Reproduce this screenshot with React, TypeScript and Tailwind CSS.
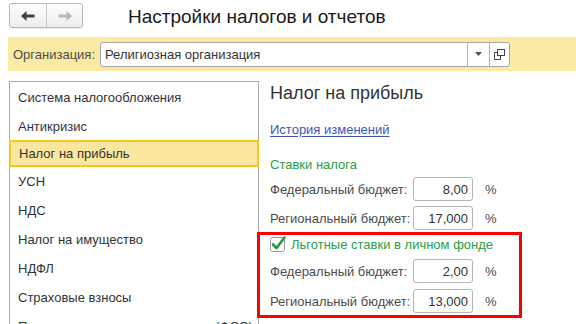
import React from "react";

const items = [
  "Система налогообложения",
  "Антикризис",
  "Налог на прибыль",
  "УСН",
  "НДС",
  "Налог на имущество",
  "НДФЛ",
  "Страховые взносы",
  "Подтверждение основного вида (ФСС)",
];

function Row({ label, value }: { label: string; value: string }) {
  return (
    <div className="flex items-center h-[24px]">
      <div className="w-[143px] text-[#4d4d4d]">{label}</div>
      <div className="w-[60px] h-[24px] border border-[#b4b4b4] rounded-[3px] bg-white flex items-center justify-end pr-[4px] text-[#333]">
        {value}
      </div>
      <div className="ml-[12px] text-[#4d4d4d]">%</div>
    </div>
  );
}

export default function App() {
  return (
    <div
      className="w-[576px] h-[324px] overflow-hidden bg-white text-[13px] leading-none"
      style={{ fontFamily: '"Liberation Sans", Arial, sans-serif' }}
    >
      {/* header */}
      <div className="flex items-start h-[37px]">
        <div className="ml-[9px] mt-[3px] w-[74px] h-[25px] flex border border-[#b8b8b8] rounded-[3px] bg-gradient-to-b from-white to-[#ececec] shadow-[0_1px_1px_rgba(0,0,0,0.08)]">
          <div className="w-[37px] h-full flex items-center justify-center border-r border-[#c8c8c8]">
            <svg width="14" height="10" viewBox="0 0 14 10">
              <path d="M0 5 L5.5 0 L5.5 3.5 L13.5 3.5 L13.5 6.5 L5.5 6.5 L5.5 10 Z" fill="#404040" />
            </svg>
          </div>
          <div className="flex-1 h-full flex items-center justify-center">
            <svg width="14" height="10" viewBox="0 0 14 10">
              <path d="M14 5 L8.5 0 L8.5 3.5 L0.5 3.5 L0.5 6.5 L8.5 6.5 L8.5 10 Z" fill="#b8b8b8" />
            </svg>
          </div>
        </div>
        <div className="ml-[45px] mt-[7px] text-[19px] text-[#1a1a1a] leading-[20px]">
          Настройки налогов и отчетов
        </div>
      </div>

      {/* org bar */}
      <div className="ml-[8px] h-[34px] bg-[#fbeaa3] flex items-center">
        <div className="ml-[5px] w-[87px] text-[#4d4d4d]">Организация:</div>
        <div className="w-[410px] h-[25px] bg-white border border-[#a6a6a6] rounded-[3px] flex items-stretch">
          <div className="flex-1 flex items-center pl-[4px] text-[#333]">Религиозная организация</div>
          <div className="w-[22px] border-l border-[#b4b4b4] flex items-center justify-center">
            <svg width="7" height="4" viewBox="0 0 7 4">
              <path d="M0 0 L7 0 L3.5 4 Z" fill="#555" />
            </svg>
          </div>
          <div className="w-[20px] border-l border-[#b4b4b4] flex items-center justify-center">
            <svg width="11" height="11" viewBox="0 0 11 11" fill="none" stroke="#444" strokeWidth="1">
              <rect x="3.5" y="0.5" width="7" height="6" />
              <path d="M3.5 3.5 H0.5 V10.5 H6.5 V6.5" />
            </svg>
          </div>
        </div>
      </div>

      {/* body */}
      <div className="flex mt-[10px]">
        <div className="ml-[9px] w-[250px] h-[260px] border-l border-t border-r border-[#a8a8a8] flex flex-col pt-px">
          {items.map((t, i) =>
            i === 2 ? (
              <div
                key={t}
                className="-ml-px -mr-px h-[30px] -mt-[1px] flex items-center pl-[8px] bg-[#fbe8a0] border-2 border-[#f8c81c] text-[#333]"
              >
                {t}
              </div>
            ) : (
              <div key={t} className="h-[29px] shrink-0 flex items-center pl-[8px] text-[#333]">
                {t}
              </div>
            )
          )}
        </div>

        <div className="flex-1 flex flex-col">
          <div className="h-[24px] flex items-center pl-[11px] text-[18px] text-[#333]">Налог на прибыль</div>
          <div className="h-[24px] mt-[12px] flex items-center pl-[11px]">
            <span className="text-[#3b58b0] underline underline-offset-2">История изменений</span>
          </div>
          <div className="h-[24px] mt-[11px] flex items-center pl-[11px] text-[#27a046]">Ставки налога</div>
          <div className="pl-[11px] mt-px flex flex-col gap-[5px]">
            <Row label="Федеральный бюджет:" value="8,00" />
            <Row label="Региональный бюджет:" value="17,000" />
          </div>
          <div className="-ml-[2px] mt-[2px] w-[265px] h-[86px] border-[3px] border-[#ff0000] flex flex-col pl-[10px] pt-[1px]">
            <div className="h-[17px] flex items-center">
              <svg width="18" height="18" viewBox="0 0 18 18" className="-mt-[2px]">
                <rect x="0.5" y="2.5" width="14" height="14" rx="2" fill="#fff" stroke="#9a9a9a" />
                <path d="M3 9.5 L6.5 13 L14.5 2.5" fill="none" stroke="#1e9a3c" strokeWidth="2.6" strokeLinecap="round" strokeLinejoin="round" />
              </svg>
              <span className="ml-[3px] text-[#27a046]">Льготные ставки в личном фонде</span>
            </div>
            <div className="mt-[6px] flex flex-col gap-[6px]">
              <Row label="Федеральный бюджет:" value="2,00" />
              <Row label="Региональный бюджет:" value="13,000" />
            </div>
          </div>
        </div>
      </div>
    </div>
  );
}
